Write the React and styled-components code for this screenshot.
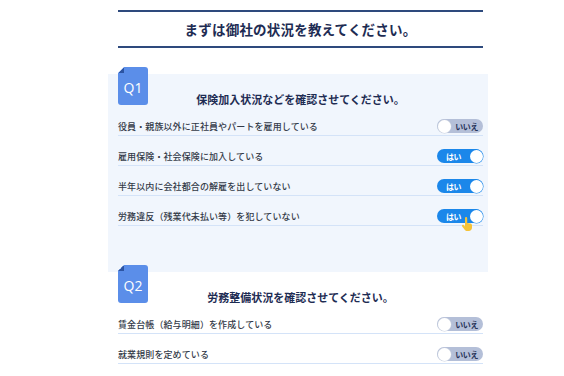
import styled, { createGlobalStyle } from 'styled-components'

const GlobalStyle = createGlobalStyle`
  html, body {
    margin: 0;
    background: #ffffff;
    font-family: "Noto Sans CJK JP", "Noto Sans", sans-serif;
  }
`

const Page = styled.div`
  width: 380px;
  margin-left: 108px;
  padding-top: 10px;
`

const Header = styled.div`
  margin: 0 5px 0 10px;
  height: 34px;
  border-top: 2px solid #2e4a7d;
  border-bottom: 2px solid #2e4a7d;
  display: flex;
  align-items: center;
  justify-content: center;
`

const HeaderTitle = styled.h1`
  margin: 0;
  font-size: 13.5px;
  font-weight: 700;
  color: #1e2c53;
  letter-spacing: 0.2px;
`

const Section = styled.section`
  position: relative;
  margin-top: ${p => p.$top}px;
  padding: 18px 5px ${p => p.$bottom}px 10px;
  background: ${p => (p.$tinted ? '#f1f6fd' : 'transparent')};
`

const Badge = styled.div`
  position: absolute;
  top: -7px;
  left: 10px;
  width: 30px;
  height: 38px;
  border-radius: 0 3px 3px 3px;
  background: #5b8ee9;
  clip-path: polygon(6px 0, 100% 0, 100% 100%, 0 100%, 0 6px);
  display: flex;
  align-items: flex-end;
  justify-content: center;
  padding-bottom: 8px;
  box-sizing: border-box;
  color: #ffffff;
  font-family: "Open Sans", "Noto Sans", sans-serif;
  font-size: 14px;
  z-index: 1;

  &::before {
    content: '';
    position: absolute;
    top: 0;
    left: 0;
    width: 6px;
    height: 6px;
    background: linear-gradient(to bottom right, transparent 50%, #2c54a3 50%);
  }
`

const SectionTitle = styled.h2`
  margin: 0;
  font-size: 11px;
  line-height: 14px;
  font-weight: 700;
  color: #1e2c53;
  text-align: center;
`

const Row = styled.div`
  position: relative;
  display: flex;
  align-items: center;
  justify-content: space-between;
  height: 18px;
  padding-top: 11px;
  border-bottom: 1px solid #d4e3f8;
`

const RowLabel = styled.span`
  font-size: 9px;
  font-weight: 500;
  letter-spacing: 0.1px;
  color: #333a48;
`

const Toggle = styled.div`
  position: relative;
  width: 46px;
  height: 14px;
  border-radius: 7px;
  background: ${p => (p.$on ? '#1b87ea' : '#b4bfd8')};
  display: flex;
  align-items: center;
  justify-content: ${p => (p.$on ? 'flex-start' : 'flex-end')};
  padding: 0 ${p => (p.$on ? '0 0 9px' : '5px 0 0')};
  box-sizing: border-box;
`

const ToggleText = styled.span`
  font-size: 8px;
  font-weight: 700;
  color: ${p => (p.$on ? '#ffffff' : '#27345a')};
  letter-spacing: -0.4px;
`

const Knob = styled.span`
  position: absolute;
  top: 0.5px;
  ${p => (p.$on ? 'right: 0.5px;' : 'left: 0.5px;')}
  width: 13px;
  height: 13px;
  border-radius: 50%;
  background: #ffffff;
  box-shadow: 0 0 0 0.5px ${p => (p.$on ? '#1b87ea' : '#c9d0df')};
`

const Cursor = styled.svg`
  position: absolute;
  right: 10px;
  top: 21px;
  width: 12px;
  height: 14px;
`

const sections = [
  {
    q: 'Q1',
    title: '保険加入状況などを確認させてください。',
    tinted: true,
    top: 26,
    bottom: 46,
    rows: [
      { label: '役員・親族以外に正社員やパートを雇用している', on: false },
      { label: '雇用保険・社会保険に加入している', on: true },
      { label: '半年以内に会社都合の解雇を出していない', on: true },
      { label: '労務違反（残業代未払い等）を犯していない', on: true, cursor: true },
    ],
  },
  {
    q: 'Q2',
    title: '労務整備状況を確認させてください。',
    tinted: false,
    top: 0,
    bottom: 20,
    rows: [
      { label: '賃金台帳（給与明細）を作成している', on: false },
      { label: '就業規則を定めている', on: false },
    ],
  },
]

function Switch ({ on }) {
  return (
    <Toggle $on={on}>
      <ToggleText $on={on}>{on ? 'はい' : 'いいえ'}</ToggleText>
      <Knob $on={on} />
    </Toggle>
  )
}

export default function App () {
  return (
    <>
      <GlobalStyle />
      <Page>
        <Header>
          <HeaderTitle>まずは御社の状況を教えてください。</HeaderTitle>
        </Header>
        {sections.map(s => (
          <Section key={s.q} $tinted={s.tinted} $top={s.top} $bottom={s.bottom}>
            <Badge>{s.q}</Badge>
            <SectionTitle>{s.title}</SectionTitle>
            {s.rows.map(r => (
              <Row key={r.label}>
                <RowLabel>{r.label}</RowLabel>
                <Switch on={r.on} />
                {r.cursor && (
                  <Cursor viewBox='0 0 12 14'>
                    <path
                      d='M4 1.2c0-.7.5-1.2 1.1-1.2s1.1.5 1.1 1.2V6l3.2.6c1 .2 1.6 1 1.6 2v2.2c0 1.8-1.4 3.2-3.2 3.2H6.2c-1 0-1.9-.5-2.5-1.3L1.2 9.4c-.4-.5-.3-1.2.2-1.5.5-.3 1.1-.2 1.4.2L4 9.4z'
                      fill='#f5c338'
                    />
                  </Cursor>
                )}
              </Row>
            ))}
          </Section>
        ))}
      </Page>
    </>
  )
}
